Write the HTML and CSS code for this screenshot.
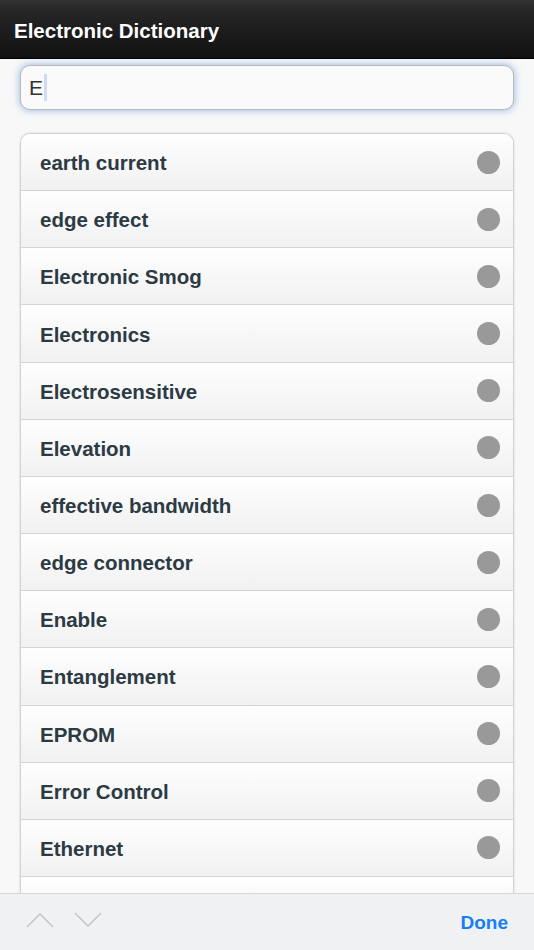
FILE: index.html
```html
<!DOCTYPE html>
<html>
<head>
<meta charset="utf-8">
<link rel="stylesheet" href="styles.css">
</head>
<body>
<header class="topbar">Electronic Dictionary</header>
<div class="search-wrap">
  <div class="search">E<span class="caret"></span></div>
</div>
<ul class="list">
  <li class="row"><span class="label">earth current</span><i class="dot"></i></li>
  <li class="row"><span class="label">edge effect</span><i class="dot"></i></li>
  <li class="row"><span class="label">Electronic Smog</span><i class="dot"></i></li>
  <li class="row"><span class="label">Electronics</span><i class="dot"></i></li>
  <li class="row"><span class="label">Electrosensitive</span><i class="dot"></i></li>
  <li class="row"><span class="label">Elevation</span><i class="dot"></i></li>
  <li class="row"><span class="label">effective bandwidth</span><i class="dot"></i></li>
  <li class="row"><span class="label">edge connector</span><i class="dot"></i></li>
  <li class="row"><span class="label">Enable</span><i class="dot"></i></li>
  <li class="row"><span class="label">Entanglement</span><i class="dot"></i></li>
  <li class="row"><span class="label">EPROM</span><i class="dot"></i></li>
  <li class="row"><span class="label">Error Control</span><i class="dot"></i></li>
  <li class="row"><span class="label">Ethernet</span><i class="dot"></i></li>
  <li class="row"><span class="label">Ethernet Card</span><i class="dot"></i></li>
</ul>
<footer class="toolbar">
  <div class="arrows">
    <svg width="28" height="16" viewBox="0 0 28 16"><path d="M1 15 L14 2 L27 15" fill="none" stroke="#c8c8ca" stroke-width="1.6"/></svg>
    <svg width="28" height="16" viewBox="0 0 28 16"><path d="M1 1 L14 14 L27 1" fill="none" stroke="#c8c8ca" stroke-width="1.6"/></svg>
  </div>
  <div class="done">Done</div>
</footer>
</body>
</html>
```
FILE: styles.css
```css
html, body {
  margin: 0;
  padding: 0;
}
body {
  background: #f8f8f8;
  font-family: "Liberation Sans", Arial, sans-serif;
  width: 534px;
  height: 950px;
  overflow: hidden;
}
.topbar {
  height: 59px;
  box-sizing: border-box;
  padding: 3px 14px 0 14px;
  display: flex;
  align-items: center;
  color: #fff;
  font-weight: bold;
  font-size: 20.5px;
  background: linear-gradient(#323232 0, #2c2c2c 5px, #252525 12px, #111 58px);
  border-bottom: 1px solid #000;
}
.search-wrap {
  padding: 6px 20px 0 20px;
}
.search {
  height: 45px;
  box-sizing: border-box;
  border: 1px solid #b9b9b9;
  border-radius: 10px;
  background: #fafafa;
  box-shadow: 0 0 7px 1px rgba(100, 150, 220, 0.55);
  padding-left: 8px;
  display: flex;
  align-items: center;
  font-size: 21px;
  color: #333;
}
.caret {
  display: inline-block;
  width: 3px;
  height: 27px;
  background: #cfdbf5;
  margin-left: 1px;
}
.list {
  list-style: none;
  margin: 23px 20px 0 20px;
  padding: 0;
  border: 1px solid #d2d2d2;
  border-bottom: none;
  border-radius: 10px 10px 0 0;
  box-shadow: 0 0 3px rgba(0,0,0,0.12);
  overflow: hidden;
  background: #fff;
}
.row {
  height: 56.17px;
  border-bottom: 1px solid #d4d4d4;
  background: linear-gradient(#fefefe, #f1f1f1);
  display: flex;
  align-items: center;
  justify-content: space-between;
  padding: 0 13px 0 19px;
  font-size: 20.5px;
  font-weight: bold;
  color: #2c3a44;
}
.label {
  padding-top: 2px;
}
.dot {
  width: 23px;
  height: 23px;
  border-radius: 50%;
  background: #999;
  display: block;
}
.toolbar {
  position: fixed;
  left: 0;
  bottom: 0;
  width: 534px;
  height: 57px;
  box-sizing: border-box;
  background: #f0f1f3;
  border-top: 1px solid #d8d8da;
  display: flex;
  align-items: center;
  justify-content: space-between;
  padding: 0 26px 0 26px;
}
.arrows {
  display: flex;
  gap: 20px;
  margin-top: -4px;
}
.arrows svg {
  display: block;
}
.done {
  color: #157efb;
  font-size: 19px;
  font-weight: bold;
  margin-top: 1px;
}
```
